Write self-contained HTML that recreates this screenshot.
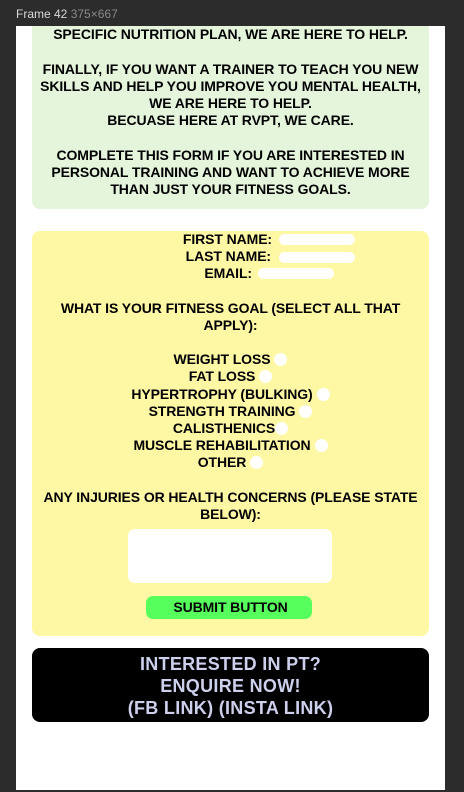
<!DOCTYPE html>
<html><head><style>
*{margin:0;padding:0;box-sizing:border-box}
body{width:464px;height:792px;background:#2c2c2c;position:relative;overflow:hidden;font-family:"Liberation Sans",sans-serif}
.lbl{position:absolute;left:16px;top:7px;font-size:12px;color:#d8d8d8;z-index:5}
.lbl span{color:#8a8a8a}
.frame{position:absolute;left:16px;top:26px;width:429px;height:764px;background:#fff}
.box{position:absolute;left:32px;width:397px;border-radius:8px}
.t{position:absolute;left:0;width:100%;text-align:center;font-weight:bold;font-size:14px;letter-spacing:-0.1px;line-height:17px;color:#000;white-space:nowrap}
.r{position:absolute;text-align:right;font-weight:bold;font-size:14px;letter-spacing:-0.1px;line-height:17px;white-space:nowrap}
.pill{position:absolute;background:#fff;border-radius:6px;height:11px}
.dot{display:inline-block;width:13px;height:13px;border-radius:50%;background:#fff;vertical-align:-2px;margin-left:4px}
</style></head><body>
<div class="frame"></div>
<div class="box" style="top:20px;height:189px;background:#e4f5dc">
<div class="t" style="top:6px">SPECIFIC NUTRITION PLAN, WE ARE HERE TO HELP.</div>
<div class="t" style="top:41px">FINALLY, IF YOU WANT A TRAINER TO TEACH YOU NEW</div>
<div class="t" style="top:58px">SKILLS AND HELP YOU IMPROVE YOU MENTAL HEALTH,</div>
<div class="t" style="top:75px">WE ARE HERE TO HELP.</div>
<div class="t" style="top:92px">BECUASE HERE AT RVPT, WE CARE.</div>
<div class="t" style="top:127px">COMPLETE THIS FORM IF YOU ARE INTERESTED IN</div>
<div class="t" style="top:144px">PERSONAL TRAINING AND WANT TO ACHIEVE MORE</div>
<div class="t" style="top:161px">THAN JUST YOUR FITNESS GOALS.</div>
</div>
<div style="position:absolute;left:0;top:0;width:464px;height:26px;background:#2c2c2c"></div>
<div class="lbl">Frame 42 <span>375×667</span></div>
<div class="box" style="top:231px;height:405px;background:#fef7a4">
<div class="r" style="top:0;right:157px">FIRST NAME:</div>
<div class="r" style="top:17px;right:158px">LAST NAME:</div>
<div class="r" style="top:34px;right:177px">EMAIL:</div>
<div class="pill" style="left:247px;top:3px;width:76px"></div>
<div class="pill" style="left:247px;top:21px;width:76px"></div>
<div class="pill" style="left:226px;top:37px;width:76px"></div>
<div class="t" style="top:69px">WHAT IS YOUR FITNESS GOAL (SELECT ALL THAT</div>
<div class="t" style="top:86px">APPLY):</div>
<div class="t" style="top:120px">WEIGHT LOSS<span class="dot"></span></div>
<div class="t" style="top:137px">FAT LOSS<span class="dot"></span></div>
<div class="t" style="top:155px">HYPERTROPHY (BULKING)<span class="dot"></span></div>
<div class="t" style="top:172px">STRENGTH TRAINING<span class="dot"></span></div>
<div class="t" style="top:189px">CALISTHENICS<span class="dot" style="margin-left:0"></span></div>
<div class="t" style="top:206px">MUSCLE REHABILITATION<span class="dot"></span></div>
<div class="t" style="top:223px">OTHER<span class="dot"></span></div>
<div class="t" style="top:258px">ANY INJURIES OR HEALTH CONCERNS (PLEASE STATE</div>
<div class="t" style="top:275px">BELOW):</div>
<div style="position:absolute;left:96px;top:298px;width:204px;height:54px;background:#fff;border-radius:7px"></div>
<div style="position:absolute;left:114px;top:365px;width:166px;height:23px;background:#57ff5d;border-radius:7px"></div>
<div class="t" style="top:368px">SUBMIT BUTTON</div>
</div>
<div class="box" style="top:648px;height:74px;background:#000">
<div class="t" style="top:5px;font-size:18px;line-height:22px;color:#cdd0ec;letter-spacing:0.3px">INTERESTED IN PT?</div>
<div class="t" style="top:27px;font-size:18px;line-height:22px;color:#cdd0ec;letter-spacing:0.3px">ENQUIRE NOW!</div>
<div class="t" style="top:49px;font-size:18px;line-height:22px;color:#cdd0ec;letter-spacing:0.3px">(FB LINK) (INSTA LINK)</div>
</div>
</body></html>
